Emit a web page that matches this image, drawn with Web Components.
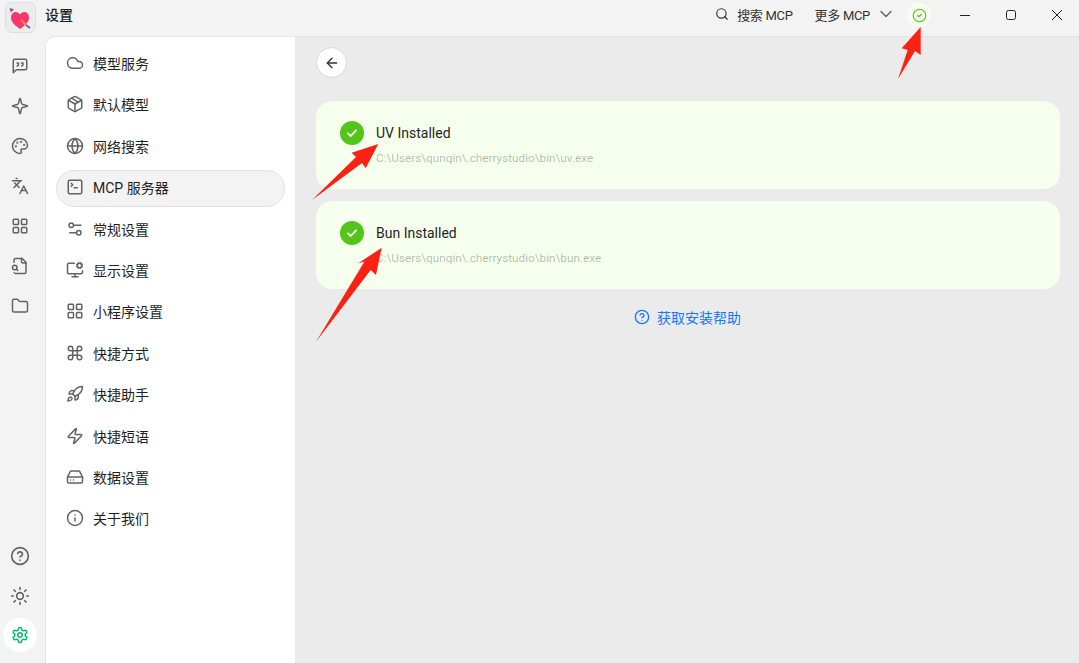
<!DOCTYPE html>
<html lang="zh">
<head>
<meta charset="utf-8">
<title>设置</title>
<style>
    html, body { margin: 0; height: 100%; overflow: hidden; }
    body { font-family: Roboto, "Noto Sans CJK SC", sans-serif; color: #1f1f1f; }
</style>
</head>
<body>
<app-shell>
    <title-bar slot="title"></title-bar>
    <nav-rail slot="rail"></nav-rail>
    <settings-menu slot="menu">
        <menu-item icon="cloud">模型服务</menu-item>
        <menu-item icon="package">默认模型</menu-item>
        <menu-item icon="globe">网络搜索</menu-item>
        <menu-item icon="terminal" active>MCP 服务器</menu-item>
        <menu-item icon="sliders">常规设置</menu-item>
        <menu-item icon="monitor">显示设置</menu-item>
        <menu-item icon="grid">小程序设置</menu-item>
        <menu-item icon="command">快捷方式</menu-item>
        <menu-item icon="rocket">快捷助手</menu-item>
        <menu-item icon="zap">快捷短语</menu-item>
        <menu-item icon="drive">数据设置</menu-item>
        <menu-item icon="info">关于我们</menu-item>
    </settings-menu>
    <install-page slot="content">
        <install-card path="C:\Users\qunqin\.cherrystudio\bin\uv.exe">UV Installed</install-card>
        <install-card path="C:\Users\qunqin\.cherrystudio\bin\bun.exe">Bun Installed</install-card>
    </install-page>
    <red-arrows slot="overlay"></red-arrows>
</app-shell>

<script>
// lucide style icons, stroke only
const ICONS = {
    quote: '<path d="M21 15a2 2 0 0 1-2 2H7l-4 4V5a2 2 0 0 1 2-2h14a2 2 0 0 1 2 2z"/><path d="M8 12a2 2 0 0 0 2-2V8H8"/><path d="M14 12a2 2 0 0 0 2-2V8h-2"/>',
    sparkle: '<path d="M9.937 15.5A2 2 0 0 0 8.5 14.063l-6.135-1.582a.5.5 0 0 1 0-.962L8.5 9.936A2 2 0 0 0 9.937 8.5l1.582-6.135a.5.5 0 0 1 .963 0L14.063 8.5A2 2 0 0 0 15.5 9.937l6.135 1.581a.5.5 0 0 1 0 .964L15.5 14.063a2 2 0 0 0-1.437 1.437l-1.582 6.135a.5.5 0 0 1-.963 0z"/>',
    palette: '<path d="M12 22a1 1 0 0 1 0-20 10 9 0 0 1 10 9 5 5 0 0 1-5 5h-2.25a1.75 1.75 0 0 0-1.4 2.8l.3.4a1.75 1.75 0 0 1-1.4 2.8z"/><circle cx="13.5" cy="6.5" r=".5" fill="currentColor"/><circle cx="17.5" cy="10.5" r=".5" fill="currentColor"/><circle cx="6.5" cy="12.5" r=".5" fill="currentColor"/><circle cx="8.5" cy="7.5" r=".5" fill="currentColor"/>',
    languages: '<path d="m5 8 6 6"/><path d="m4 14 6-6 2-3"/><path d="M2 5h12"/><path d="M7 2h1"/><path d="m22 22-5-10-5 10"/><path d="M14 18h6"/>',
    grid: '<rect width="7" height="7" x="3" y="3" rx="1"/><rect width="7" height="7" x="14" y="3" rx="1"/><rect width="7" height="7" x="14" y="14" rx="1"/><rect width="7" height="7" x="3" y="14" rx="1"/>',
    file: '<path d="M14 2v4a2 2 0 0 0 2 2h4"/><path d="M4.268 21a2 2 0 0 0 1.727 1H18a2 2 0 0 0 2-2V7l-5-5H6a2 2 0 0 0-2 2v3"/><path d="m9 18-1.5-1.5"/><circle cx="5" cy="14" r="3"/>',
    folder: '<path d="M20 20a2 2 0 0 0 2-2V8a2 2 0 0 0-2-2h-7.9a2 2 0 0 1-1.69-.9L9.6 3.9A2 2 0 0 0 7.93 3H4a2 2 0 0 0-2 2v13a2 2 0 0 0 2 2Z"/>',
    help: '<circle cx="12" cy="12" r="10"/><path d="M9.09 9a3 3 0 0 1 5.83 1c0 2-3 3-3 3"/><path d="M12 17h.01"/>',
    sun: '<circle cx="12" cy="12" r="4"/><path d="M12 2v2"/><path d="M12 20v2"/><path d="m4.93 4.93 1.41 1.41"/><path d="m17.66 17.66 1.41 1.41"/><path d="M2 12h2"/><path d="M20 12h2"/><path d="m6.34 17.66-1.41 1.41"/><path d="m19.07 4.93-1.41 1.41"/>',
    settings: '<path d="M12.22 2h-.44a2 2 0 0 0-2 2v.18a2 2 0 0 1-1 1.73l-.43.25a2 2 0 0 1-2 0l-.15-.08a2 2 0 0 0-2.73.73l-.22.38a2 2 0 0 0 .73 2.73l.15.1a2 2 0 0 1 1 1.72v.51a2 2 0 0 1-1 1.74l-.15.09a2 2 0 0 0-.73 2.73l.22.38a2 2 0 0 0 2.73.73l.15-.08a2 2 0 0 1 2 0l.43.25a2 2 0 0 1 1 1.73V20a2 2 0 0 0 2 2h.44a2 2 0 0 0 2-2v-.18a2 2 0 0 1 1-1.73l.43-.25a2 2 0 0 1 2 0l.15.08a2 2 0 0 0 2.73-.73l.22-.39a2 2 0 0 0-.73-2.73l-.15-.08a2 2 0 0 1-1-1.74v-.5a2 2 0 0 1 1-1.74l.15-.09a2 2 0 0 0 .73-2.73l-.22-.38a2 2 0 0 0-2.73-.73l-.15.08a2 2 0 0 1-2 0l-.43-.25a2 2 0 0 1-1-1.73V4a2 2 0 0 0-2-2z"/><circle cx="12" cy="12" r="3"/>',
    cloud: '<path d="M17.5 19H9a7 7 0 1 1 6.71-9h1.79a4.5 4.5 0 1 1 0 9Z"/>',
    package: '<path d="M11 21.73a2 2 0 0 0 2 0l7-4A2 2 0 0 0 21 16V8a2 2 0 0 0-1-1.73l-7-4a2 2 0 0 0-2 0l-7 4A2 2 0 0 0 3 8v8a2 2 0 0 0 1 1.73z"/><path d="M12 22V12"/><path d="M3.29 7 12 12l8.71-5"/><path d="m7.5 4.27 9 5.15"/>',
    globe: '<circle cx="12" cy="12" r="10"/><path d="M12 2a14.5 14.5 0 0 0 0 20 14.5 14.5 0 0 0 0-20"/><path d="M2 12h20"/>',
    terminal: '<path d="m7 11 2-2-2-2"/><path d="M11 13h4"/><rect width="18" height="18" x="3" y="3" rx="2"/>',
    sliders: '<path d="M20 7h-9"/><path d="M14 17H5"/><circle cx="17" cy="17" r="3"/><circle cx="7" cy="7" r="3"/>',
    monitor: '<path d="M12 17v4"/><path d="m14.305 7.53.923-.382"/><path d="m15.228 4.852-.923-.383"/><path d="m16.852 3.228-.383-.924"/><path d="m16.852 8.772-.383.923"/><path d="m19.148 3.228.383-.924"/><path d="m19.53 9.696-.382-.924"/><path d="m20.772 4.852.924-.383"/><path d="m20.772 7.148.924.383"/><path d="M22 13v2a2 2 0 0 1-2 2H4a2 2 0 0 1-2-2V5a2 2 0 0 1 2-2h7"/><path d="M8 21h8"/><circle cx="18" cy="6" r="3"/>',
    command: '<path d="M15 6v12a3 3 0 1 0 3-3H6a3 3 0 1 0 3 3V6a3 3 0 1 0-3 3h12a3 3 0 1 0-3-3"/>',
    rocket: '<path d="M4.5 16.5c-1.5 1.26-2 5-2 5s3.74-.5 5-2c.71-.84.7-2.13-.09-2.91a2.18 2.18 0 0 0-2.91-.09z"/><path d="m12 15-3-3a22 22 0 0 1 2-3.95A12.88 12.88 0 0 1 22 2c0 2.72-.78 7.5-6 11a22.35 22.35 0 0 1-4 2z"/><path d="M9 12H4s.55-3.03 2-4c1.62-1.08 5 0 5 0"/><path d="M12 15v5s3.03-.55 4-2c1.08-1.62 0-5 0-5"/>',
    zap: '<path d="M4 14a1 1 0 0 1-.78-1.63l9.9-10.2a.5.5 0 0 1 .86.46l-1.92 6.02A1 1 0 0 0 13 10h7a1 1 0 0 1 .78 1.63l-9.9 10.2a.5.5 0 0 1-.86-.46l1.92-6.02A1 1 0 0 0 11 14z"/>',
    drive: '<path d="M22 12H2"/><path d="M5.45 5.11 2 12v6a2 2 0 0 0 2 2h16a2 2 0 0 0 2-2v-6l-3.45-6.89A2 2 0 0 0 16.76 4H7.24a2 2 0 0 0-1.79 1.11z"/><path d="M6 16h.01"/><path d="M10 16h.01"/>',
    info: '<circle cx="12" cy="12" r="10"/><path d="M12 16v-4"/><path d="M12 8h.01"/>',
    search: '<circle cx="11" cy="11" r="8"/><path d="m21 21-4.3-4.3"/>',
    back: '<path d="m12 19-7-7 7-7"/><path d="M19 12H5"/>',
    chevron: '<path d="m6 9 6 6 6-6"/>',
    check: '<circle cx="12" cy="12" r="10"/><path d="m9 12 2 2 4-4"/>',
};

class UiIcon extends HTMLElement {
    connectedCallback() {
        const size = this.getAttribute('size') || 18;
        const weight = this.getAttribute('weight') || 2;
        this.attachShadow({ mode: 'open' }).innerHTML = `
            <style>
                :host { display: inline-flex; flex: none; color: inherit; }
                svg { display: block; }
            </style>
            <svg width="${size}" height="${size}" viewBox="0 0 24 24" fill="none" stroke="currentColor"
                 stroke-width="${weight}" stroke-linecap="round" stroke-linejoin="round">${ICONS[this.getAttribute('name')]}</svg>`;
    }
}

class AppShell extends HTMLElement {
    constructor() {
        super();
        this.attachShadow({ mode: 'open' }).innerHTML = `
            <style>
                :host {
                    display: grid;
                    position: relative;
                    width: 1079px;
                    height: 663px;
                    overflow: hidden;
                    grid-template-columns: 45px 250px 1fr;
                    grid-template-rows: 36px 1fr;
                    background: #f3f3f3;
                }
                .title { grid-column: 1 / 4; }
                .menu, .content { min-height: 0; }
            </style>
            <div class="title"><slot name="title"></slot></div>
            <slot name="rail"></slot>
            <div class="menu"><slot name="menu"></slot></div>
            <div class="content"><slot name="content"></slot></div>
            <slot name="overlay"></slot>`;
    }
}

class TitleBar extends HTMLElement {
    constructor() {
        super();
        this.attachShadow({ mode: 'open' }).innerHTML = `
            <style>
                :host { display: flex; box-sizing: border-box; height: 36px; padding-bottom: 6px; align-items: center; color: #1f1f1f; font-size: 13px; }
                .logo {
                    box-sizing: border-box;
                    width: 31px;
                    height: 31px;
                    margin: 5px 9px 0 5px;
                    background: #ececec;
                    border: 1px solid #dedede;
                    border-radius: 7px;
                }
                .logo svg { display: block; }
                h1 { margin: 0 0 2px; font-size: 14px; font-weight: 500; flex: 1; }
                .action { display: flex; align-items: center; color: #333; letter-spacing: -.3px; margin-bottom: 2px; }
                .search { gap: 8px; margin-right: 22px; }
                .more { gap: 6px; margin-right: 11px; }
                .status {
                    display: flex;
                    align-items: center;
                    justify-content: center;
                    width: 24px;
                    height: 24px;
                    border-radius: 50%;
                    background: #f6ffed;
                    color: #52c41a;
                    margin-right: 10px;
                }
                .win { display: flex; align-items: center; justify-content: center; width: 46px; height: 30px; color: #222; }
                .win svg { display: block; margin-left: 2px; }
            </style>
            <div class="logo">
                <svg width="29" height="29" viewBox="0 0 29 29">
                    <path d="M14 26C8 22 5 18.500 5 14.500C5 11 7.200 9 9.800 9C11.600 9 13 10 14 11.500C15 10 16.400 9 18.200 9C20.800 9 23 11 23 14.500C23 18.500 20 22 14 26z" fill="#f8386c"/>
                    <path d="M3.500 5l4.600 1.200-3.400 3.400z" fill="#7a5aa8"/>
                    <path d="M15 17l5 5" stroke="#f59331" stroke-width="2"/>
                    <path d="M20 22l4 3" stroke="#7a5aa8" stroke-width="1.800"/>
                </svg>
            </div>
            <h1>设置</h1>
            <div class="action search"><ui-icon name="search" size="14"></ui-icon><span>搜索 MCP</span></div>
            <div class="action more"><span>更多 MCP</span><ui-icon name="chevron" size="20" weight="1.800" style="color:#666"></ui-icon></div>
            <div class="status"><ui-icon name="check" size="15" weight="1.800"></ui-icon></div>
            <div class="win"><svg width="12" height="12" viewBox="0 0 12 12"><path d="M1 6.500h10" stroke="currentColor" stroke-width="1"/></svg></div>
            <div class="win"><svg width="12" height="12" viewBox="0 0 12 12"><rect x="1.500" y="1.500" width="9" height="9" rx="2" fill="none" stroke="currentColor" stroke-width="1"/></svg></div>
            <div class="win"><svg width="12" height="12" viewBox="0 0 12 12"><path d="M1 1l10 10M11 1L1 11" fill="none" stroke="currentColor" stroke-width="1"/></svg></div>`;
    }
}

class NavRail extends HTMLElement {
    constructor() {
        super();
        this.attachShadow({ mode: 'open' }).innerHTML = `
            <style>
                :host {
                    display: flex;
                    flex-direction: column;
                    align-items: center;
                    padding: 21px 0 11px;
                    box-sizing: border-box;
                    color: #636363;
                    width: 40px;
                }
                .group { display: flex; flex-direction: column; gap: 22px; }
                .bottom { margin-top: auto; align-items: center; gap: 20px; }
                .active {
                    display: flex;
                    align-items: center;
                    justify-content: center;
                    width: 34px;
                    height: 34px;
                    margin-top: -8px;
                    border-radius: 50%;
                    background: #fff;
                    color: #00b96b;
                }
            </style>
            <div class="group">
                ${['quote', 'sparkle', 'palette', 'languages', 'grid', 'file', 'folder']
                    .map(n => `<ui-icon name="${n}" size="18"></ui-icon>`).join('')}
            </div>
            <div class="group bottom">
                <ui-icon name="help" size="20"></ui-icon>
                <ui-icon name="sun" size="20"></ui-icon>
                <div class="active"><ui-icon name="settings" size="18"></ui-icon></div>
            </div>`;
    }
}

class SettingsMenu extends HTMLElement {
    constructor() {
        super();
        this.attachShadow({ mode: 'open' }).innerHTML = `
            <style>
                :host {
                    display: flex;
                    flex-direction: column;
                    gap: 4.400px;
                    box-sizing: border-box;
                    height: 100%;
                    padding: 8.500px 10px;
                    background: #fff;
                    border-top: 1px solid #e6e6e6;
                    border-left: 1px solid #e6e6e6;
                    border-top-left-radius: 10px;
                }
            </style>
            <slot></slot>`;
    }
}

class MenuItem extends HTMLElement {
    connectedCallback() {
        this.attachShadow({ mode: 'open' }).innerHTML = `
            <style>
                :host {
                    display: flex;
                    align-items: center;
                    gap: 9px;
                    box-sizing: border-box;
                    height: 37px;
                    padding: 0 8.500px 2px 9px;
                    font-size: 14px;
                    color: #1f1f1f;
                    border: 1px solid transparent;
                    border-radius: 18px;
                }
                :host([active]) { background: #f3f3f3; border-color: #e2e2e2; }
                ui-icon { color: #636363; }
            </style>
            <ui-icon name="${this.getAttribute('icon')}" size="18"></ui-icon>
            <slot></slot>`;
    }
}

class InstallPage extends HTMLElement {
    constructor() {
        super();
        this.attachShadow({ mode: 'open' }).innerHTML = `
            <style>
                :host {
                    display: flex;
                    flex-direction: column;
                    box-sizing: border-box;
                    height: 100%;
                    padding: 10px 19px 0 21px;
                    background: #ebebeb;
                    border-top: 1px solid #e4e4e4;
                }
                .back {
                    display: flex;
                    align-items: center;
                    justify-content: center;
                    box-sizing: border-box;
                    width: 31px;
                    height: 31px;
                    margin-bottom: 23px;
                    border: 1px solid #d9d9d9;
                    border-radius: 50%;
                    background: #fff;
                    color: #333;
                }
                .cards { display: flex; flex-direction: column; gap: 12px; }
                .help {
                    display: flex;
                    align-items: center;
                    justify-content: center;
                    gap: 7px;
                    margin-top: 17px;
                    padding-right: 1px;
                    height: 22px;
                    color: #1677ff;
                    font-size: 14px;
                }
            </style>
            <div class="back"><ui-icon name="back" size="16"></ui-icon></div>
            <div class="cards"><slot></slot></div>
            <div class="help"><ui-icon name="help" size="16"></ui-icon><span>获取安装帮助</span></div>`;
    }
}

class InstallCard extends HTMLElement {
    connectedCallback() {
        this.attachShadow({ mode: 'open' }).innerHTML = `
            <style>
                :host {
                    display: flex;
                    gap: 12px;
                    box-sizing: border-box;
                    height: 88px;
                    padding: 20px 24px;
                    border-radius: 16px;
                    background: #f6ffed;
                }
                .mark {
                    display: flex;
                    align-items: center;
                    justify-content: center;
                    flex: none;
                    width: 24px;
                    height: 24px;
                    border-radius: 50%;
                    background: #52c41a;
                }
                .title { height: 24px; line-height: 24px; font-size: 14px; color: #1f1f1f; }
                .path { margin-top: 3px; line-height: 20px; font-size: 11.750px; color: rgba(0, 0, 0, .28); }
            </style>
            <div class="mark">
                <svg width="12" height="12" viewBox="0 0 12 12" fill="none" stroke="#fff" stroke-width="1.800" stroke-linecap="round" stroke-linejoin="round"><path d="M2 6.300l2.800 2.700L10 3.300"/></svg>
            </div>
            <div>
                <div class="title"><slot></slot></div>
                <div class="path">${this.getAttribute('path')}</div>
            </div>`;
    }
}

// red annotation arrows painted on top of the screenshot
class RedArrows extends HTMLElement {
    constructor() {
        super();
        this.attachShadow({ mode: 'open' }).innerHTML = `
            <style>
                :host { position: absolute; inset: 0; pointer-events: none; }
                svg { display: block; }
            </style>
            <svg width="1079" height="663" viewBox="0 0 1079 663" fill="#fb2113">
                <polygon points="920.700,27 920.700,55 915,51 898,79 907.700,50 901.700,48.300"/>
                <polygon points="378.300,144 365.700,168.300 362,163 312,200 356,157 351.700,152.700"/>
                <polygon points="381.700,247.700 376,275 370.700,270 316,341.700 364.300,261.700 358.300,263.300"/>
            </svg>`;
    }
}

customElements.define('ui-icon', UiIcon);
customElements.define('app-shell', AppShell);
customElements.define('title-bar', TitleBar);
customElements.define('nav-rail', NavRail);
customElements.define('settings-menu', SettingsMenu);
customElements.define('menu-item', MenuItem);
customElements.define('install-page', InstallPage);
customElements.define('install-card', InstallCard);
customElements.define('red-arrows', RedArrows);
</script>
</body>
</html>
